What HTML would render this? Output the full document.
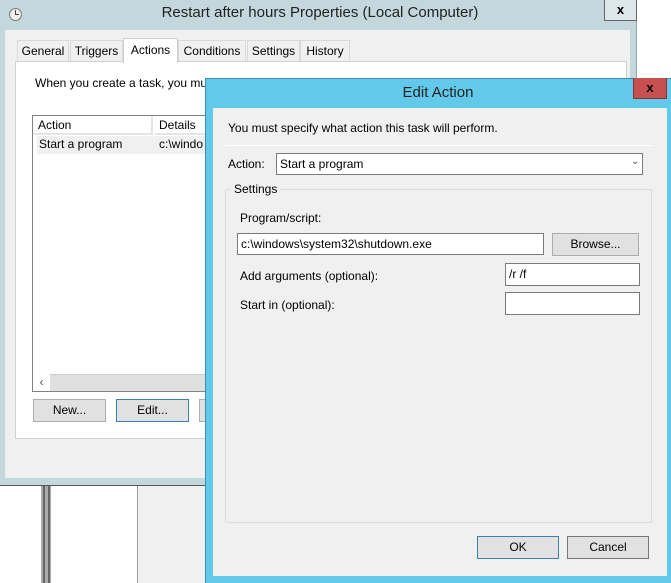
<!DOCTYPE html>
<html><head><style>
*{margin:0;padding:0;box-sizing:border-box}
body{width:671px;height:583px;position:relative;overflow:hidden;background:#fff;font-family:"Liberation Sans",sans-serif;font-size:12px;color:#000}
.a{position:absolute}
.btn{position:absolute;background:#e1e1e1;border:1px solid #adadad;text-align:center;line-height:20px;font-size:12px}
.inp{position:absolute;background:#fff;border:1px solid #7a7a7a;padding-left:3px;line-height:20px;font-size:12px}
.tab{position:absolute;top:40px;height:22px;border:1px solid #d9d9d9;border-bottom:none;background:#f0f0f0;font-size:12px;line-height:21px;text-align:center}
</style></head><body>
<!-- below back window -->
<div class="a" style="left:0;top:485px;width:205px;height:98px;background:#fff"></div>
<div class="a" style="left:41px;top:485px;width:10px;height:98px;background:repeating-linear-gradient(90deg,#aaa 0 2px,#666 2px 4px,#aaa 4px 5px)"></div>
<div class="a" style="left:137px;top:485px;width:1px;height:98px;background:#999"></div>
<div class="a" style="left:138px;top:485px;width:67px;height:98px;background:#f0f0f0"></div>
<!-- back window -->
<div class="a" style="left:0;top:0;width:637px;height:486px;background:#c4d7dd;border-bottom:1px solid #555;border-right:1px solid #8aa"></div>
<div class="a" style="left:9px;top:8px;width:13px;height:13px;border-radius:50%;border:1px solid #777;background:#eee"></div>
<div class="a" style="left:15px;top:10px;width:1px;height:5px;background:#444"></div>
<div class="a" style="left:15px;top:14px;width:4px;height:1px;background:#444"></div>
<div class="a" style="left:0;top:4px;width:640px;text-align:center;font-size:15px;color:#222">Restart after hours Properties (Local Computer)</div>
<div class="a" style="left:604px;top:0;width:33px;height:21px;border:1px solid #666;border-top:none;background:#dde7ea;text-align:center;font-weight:bold;font-size:13px;line-height:19px">x</div>
<div class="a" style="left:5px;top:30px;width:625px;height:448px;background:#f0f0f0"></div>
<div class="tab" style="left:17px;width:52px">General</div>
<div class="tab" style="left:70px;width:53px">Triggers</div>
<div class="tab" style="left:178px;width:68px">Conditions</div>
<div class="tab" style="left:247px;width:53px">Settings</div>
<div class="tab" style="left:300px;width:50px">History</div>
<div class="a" style="left:15px;top:61px;width:612px;height:378px;background:#fff;border:1px solid #d0d0d0"></div>
<div class="tab" style="left:123px;top:38px;width:55px;height:25px;background:#fff;border-color:#d0d0d0;line-height:22px">Actions</div>
<div class="a" style="left:35px;top:76px">When you create a task, you must</div>
<div class="a" style="left:32px;top:115px;width:180px;height:277px;border:1px solid #828282;background:#fff"></div>
<div class="a" style="left:33px;top:116px;width:120px;height:19px;border-right:2px solid #e5e5e5;border-bottom:2px solid #e5e5e5;padding-left:5px;line-height:18px">Action</div>
<div class="a" style="left:155px;top:116px;width:55px;height:19px;border-bottom:2px solid #e5e5e5;padding-left:4px;line-height:18px">Details</div>
<div class="a" style="left:37px;top:136px;width:175px;height:18px;background:#f0f0f0"></div>
<div class="a" style="left:39px;top:137px">Start a program</div>
<div class="a" style="left:159px;top:137px">c:\windo</div>
<div class="a" style="left:33px;top:374px;width:179px;height:17px;background:#e0e0e0;border-top:1px solid #ccc"></div>
<div class="a" style="left:33px;top:374px;width:17px;height:17px;background:#fff;text-align:center;line-height:16px;color:#555">‹</div>
<div class="btn" style="left:33px;top:399px;width:73px;height:23px">New...</div>
<div class="btn" style="left:116px;top:399px;width:73px;height:23px;border-color:#3c7fb1">Edit...</div>
<div class="btn" style="left:199px;top:399px;width:20px;height:23px"></div>
<!-- edit action dialog -->
<div class="a" style="left:205px;top:78px;width:466px;height:505px;background:#63c9ea;border-left:1px solid #3a8fb0;border-top:1px solid #3a8fb0"></div>
<div class="a" style="left:205px;top:84px;width:466px;text-align:center;font-size:15px;color:#222">Edit Action</div>
<div class="a" style="left:633px;top:78px;width:34px;height:21px;background:#c75050;border:1px solid #8a3030;border-top:none;text-align:center;font-weight:bold;font-size:13px;line-height:19px">x</div>
<div class="a" style="left:213px;top:108px;width:454px;height:468px;background:#f0f0f0"></div>
<div class="a" style="left:228px;top:121px">You must specify what action this task will perform.</div>
<div class="a" style="left:225px;top:145px;width:427px;height:1px;background:#c8c8c8;border-bottom:1px solid #fff"></div>
<div class="a" style="left:228px;top:157px">Action:</div>
<div class="inp" style="left:276px;top:153px;width:367px;height:22px">Start a program</div>
<div class="a" style="left:631px;top:156px;font-size:10px;color:#555">⌄</div>
<div class="a" style="left:225px;top:189px;width:427px;height:334px;border:1px solid #dcdcdc;border-radius:2px"></div>
<div class="a" style="left:231px;top:182px;background:#f0f0f0;padding:0 3px">Settings</div>
<div class="a" style="left:240px;top:211px">Program/script:</div>
<div class="inp" style="left:237px;top:233px;width:307px;height:22px">c:\windows\system32\shutdown.exe</div>
<div class="btn" style="left:552px;top:233px;width:87px;height:23px">Browse...</div>
<div class="a" style="left:240px;top:269px">Add arguments (optional):</div>
<div class="inp" style="left:505px;top:263px;width:135px;height:23px">/r /f</div>
<div class="a" style="left:240px;top:298px">Start in (optional):</div>
<div class="inp" style="left:505px;top:292px;width:135px;height:23px"></div>
<div class="btn" style="left:477px;top:536px;width:82px;height:23px;border-color:#3c7fb1">OK</div>
<div class="btn" style="left:567px;top:536px;width:82px;height:23px;border-color:#777">Cancel</div>
</body></html>
